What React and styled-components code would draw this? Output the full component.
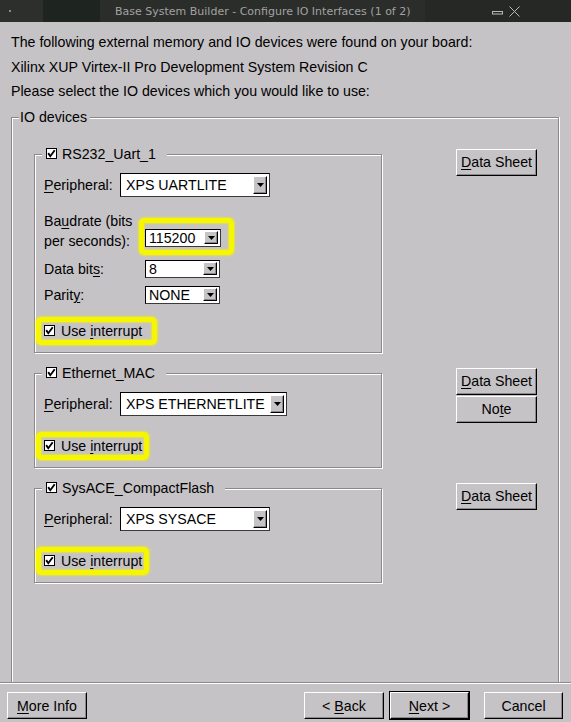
import React from 'react';
import styled, { createGlobalStyle } from 'styled-components';

const BG = '#c6c3c6';
const SHADOW = '#8b898b';
const YELLOW = '#f6f600';

const Global = createGlobalStyle`
  html, body { margin: 0; padding: 0; background: ${BG}; }
  body {
    font-family: "Liberation Sans", Arial, Helvetica, sans-serif;
    font-size: 14.2px;
    color: #000;
  }
  * { box-sizing: border-box; }
  u { text-decoration-thickness: 1px; text-underline-offset: 2px; }
`;

const Window = styled.div`
  width: 571px;
  height: 722px;
  display: flex;
  flex-direction: column;
  background: ${BG};
  overflow: hidden;
`;

/* ---------- title bar ---------- */
const TitleBar = styled.div`
  flex: none;
  height: 22px;
  display: flex;
  background: #262826;
  font-family: "DejaVu Sans", sans-serif;
  font-size: 11px;
  color: #a2a2a2;
`;

const TitleSeg = styled.div`
  width: ${p => p.$w}px;
  flex: none;
  background: ${p => p.$bg};
  display: flex;
  align-items: center;
  padding-left: ${p => p.$pl || 0}px;
  white-space: nowrap;
`;

const SysDot = styled.span`
  width: 2px;
  height: 2px;
  background: #8a8a8a;
`;

const TitleControls = styled.div`
  flex: 1;
  display: flex;
  align-items: center;
  gap: 6px;
  padding-left: 67px;
`;

const MinIcon = styled.svg`
  margin-top: 4px;
`;

/* ---------- body ---------- */
const Body = styled.div`
  flex: 1;
  min-height: 0;
  display: flex;
  flex-direction: column;
  padding: 8px 12px 0 11px;
`;

const IntroLine = styled.div`
  line-height: 24.5px;
  white-space: nowrap;
`;

const Frame = styled.div`
  position: relative;
  flex: 1;
  margin-top: 13px;
  border: 1px solid ${SHADOW};
  border-bottom: none;
  box-shadow: inset 1px 1px 0 #fff, 1px 0 0 #fff;
  padding: 31px 20px 0 22px;
  display: flex;
  flex-direction: column;
  gap: 15px;
`;

const FrameLegend = styled.div`
  position: absolute;
  top: -10px;
  left: 7px;
  padding: 0 3px 0 1px;
  line-height: 18px;
  background: ${BG};
`;

const DeviceRow = styled.div`
  display: flex;
  align-items: flex-start;
  gap: 74px;
`;

const Group = styled.div`
  position: relative;
  width: 348px;
  margin-top: 5px;
  border: 1px solid ${SHADOW};
  box-shadow: inset 1px 1px 0 #fff, 1px 1px 0 #fff;
  padding: 18px 9px 7px 9px;
  display: flex;
  flex-direction: column;
  align-items: flex-start;
`;

const GroupLegend = styled.div`
  position: absolute;
  top: -10px;
  left: 7px;
  padding: 0 11px 0 4px;
  background: ${BG};
  display: flex;
  align-items: center;
  gap: 5px;
  line-height: 18px;
  white-space: nowrap;
`;

const FieldRow = styled.div`
  display: flex;
  align-items: center;
`;

const FieldLabel = styled.span`
  width: ${p => p.$w}px;
  flex: none;
  white-space: nowrap;
`;

const Settings = styled.div`
  display: grid;
  grid-template-columns: 101px auto;
  grid-template-rows: 45px 26px 26px;
  align-items: center;
  margin-top: 14px;
`;

const MultiLabel = styled.span`
  align-self: start;
  line-height: 20px;
  white-space: nowrap;
`;

const Combo = styled.div`
  width: ${p => p.$w}px;
  height: ${p => p.$h}px;
  background: #fff;
  border: 1px solid;
  border-color: #000 #3a3a3a #3a3a3a #000;
  display: flex;
  align-items: center;
  padding-left: ${p => p.$pl}px;
  line-height: 16px;
  white-space: nowrap;
`;

const ComboText = styled.span`
  flex: 1;
`;

const ComboArrow = styled.span`
  flex: none;
  width: 14px;
  height: ${p => p.$h}px;
  margin-right: 2px;
  background: ${BG};
  border: 1px solid;
  border-color: #fff #000 #000 #fff;
  box-shadow: inset -1px -1px 0 ${SHADOW};
  display: flex;
  align-items: center;
  justify-content: center;
`;

const Highlight = styled.div`
  display: inline-flex;
  align-items: center;
  align-self: ${p => p.$align || 'auto'};
  border: 5px solid ${YELLOW};
  border-radius: 5px;
  box-shadow: 0 0 2px 1px rgba(246, 246, 0, 0.55), inset 0 0 2px 1px rgba(246, 246, 0, 0.55);
  padding: ${p => p.$pad};
  margin: ${p => p.$m};
`;

const CheckRow = styled.div`
  display: flex;
  align-items: center;
  gap: 6px;
  height: 18px;
  white-space: nowrap;
`;

const ButtonCol = styled.div`
  display: flex;
  flex-direction: column;
  gap: 1px;
  width: 81px;
`;

const Button = styled.button`
  width: ${p => p.$w || 81}px;
  height: 27px;
  flex: none;
  padding: 0;
  background: ${BG};
  color: #000;
  font-family: "Liberation Sans", Arial, sans-serif;
  font-size: 14.2px;
  border: 1px solid;
  border-color: #fff #000 #000 #fff;
  box-shadow: inset -1px -1px 0 ${SHADOW};
  cursor: default;
`;

const DefaultFrame = styled.div`
  border: 1px solid #000;
  margin-top: -1px;
  display: flex;
`;

/* ---------- footer ---------- */
const Separator = styled.div`
  flex: none;
  height: 2px;
  border-top: 1px solid ${SHADOW};
  border-bottom: 1px solid #fff;
`;

const Footer = styled.div`
  flex: none;
  height: 38px;
  display: flex;
  align-items: flex-start;
  padding: 8px 8px 0 7px;
`;

const Spacer = styled.div`
  flex: 1;
`;

const FooterGap = styled.div`
  width: ${p => p.$w}px;
  flex: none;
`;

/* ---------- small drawings ---------- */
const CheckBox = () => (
  <svg width="11" height="11" viewBox="0 0 11 11" style={{ flex: 'none' }}>
    <rect x="0.5" y="0.5" width="10" height="10" fill="#fff" stroke="#000" />
    <path d="M2.2 5.1 L4.3 8.2 L8.7 2.3" stroke="#000" strokeWidth="1.9" fill="none" />
  </svg>
);

const DownTriangle = () => (
  <svg width="7" height="4" viewBox="0 0 7 4">
    <path d="M0 0 H7 L3.5 4 Z" fill="#000" />
  </svg>
);

const ComboBox = ({ value, w, h, arrowH, pl = 5 }) => (
  <Combo $w={w} $h={h} $pl={pl}>
    <ComboText>{value}</ComboText>
    <ComboArrow $h={arrowH}>
      <DownTriangle />
    </ComboArrow>
  </Combo>
);

const UseInterrupt = ({ m, pr }) => (
  <Highlight $m={m} $pad={`0 ${pr}px 0 3px`}>
    <CheckRow>
      <CheckBox />
      <span>Use <u>i</u>nterrupt</span>
    </CheckRow>
  </Highlight>
);

const Legend = ({ children }) => (
  <GroupLegend>
    <CheckBox />
    <span>{children}</span>
  </GroupLegend>
);

const Peripheral = ({ value, w }) => (
  <FieldRow>
    <FieldLabel $w={76}><u>P</u>eripheral:</FieldLabel>
    <ComboBox value={value} w={w} h={24} arrowH={18} />
  </FieldRow>
);

export default function App() {
  return (
    <Window>
      <Global />
      <TitleBar>
        <TitleSeg $w={43} $bg="#2d2f2d" $pl={9}><SysDot /></TitleSeg>
        <TitleSeg $w={57} $bg="#1e2520" />
        <TitleSeg $w={325} $bg="#2b2d2b" $pl={15}>
          Base System Builder - Configure IO Interfaces (1 of 2)
        </TitleSeg>
        <TitleControls>
          <MinIcon width="11" height="4" viewBox="0 0 11 4">
            <rect x="0.5" y="0.5" width="10" height="2.5" fill="none" stroke="#b8b8b8" />
          </MinIcon>
          <svg width="11" height="11" viewBox="0 0 11 11">
            <path d="M0.5 0.5 L10.5 10.5 M10.5 0.5 L0.5 10.5" stroke="#b8b8b8" strokeWidth="1" />
          </svg>
        </TitleControls>
      </TitleBar>

      <Body>
        <IntroLine>The following external memory and IO devices were found on your board:</IntroLine>
        <IntroLine>Xilinx XUP Virtex-II Pro Development System Revision C</IntroLine>
        <IntroLine>Please select the IO devices which you would like to use:</IntroLine>

        <Frame>
          <FrameLegend>IO devices</FrameLegend>

          <DeviceRow>
            <Group>
              <Legend>RS232_Uart_1</Legend>
              <Peripheral value="XPS UARTLITE" w={150} />
              <Settings>
                <MultiLabel>Ba<u>u</u>drate (bits<br />per seconds):</MultiLabel>
                <Highlight $align="end" $m="0 0 1px -6px" $pad="6px 8px 3px 1px">
                  <ComboBox value="115200" w={76} h={18} arrowH={13} pl={3} />
                </Highlight>
                <span>Data bit<u>s</u>:</span>
                <ComboBox value="8" w={75} h={18} arrowH={13} pl={3} />
                <span>Parit<u>y</u>:</span>
                <ComboBox value="NONE" w={75} h={18} arrowH={13} pl={3} />
              </Settings>
              <UseInterrupt m="9px 0 0 -8px" pr={10} />
            </Group>
            <ButtonCol>
              <Button><u>D</u>ata Sheet</Button>
            </ButtonCol>
          </DeviceRow>

          <DeviceRow>
            <Group>
              <Legend>Ethernet_MAC</Legend>
              <Peripheral value="XPS ETHERNETLITE" w={167} />
              <UseInterrupt m="16px 0 0 -8px" pr={2} />
            </Group>
            <ButtonCol>
              <Button><u>D</u>ata Sheet</Button>
              <Button>No<u>t</u>e</Button>
            </ButtonCol>
          </DeviceRow>

          <DeviceRow>
            <Group>
              <Legend>SysACE_CompactFlash</Legend>
              <Peripheral value="XPS SYSACE" w={150} />
              <UseInterrupt m="16px 0 0 -8px" pr={2} />
            </Group>
            <ButtonCol>
              <Button><u>D</u>ata Sheet</Button>
            </ButtonCol>
          </DeviceRow>
        </Frame>
      </Body>

      <Separator />
      <Footer>
        <Button $w={80}><u>M</u>ore Info</Button>
        <Spacer />
        <Button $w={80}>&lt; <u>B</u>ack</Button>
        <FooterGap $w={5} />
        <DefaultFrame>
          <Button $w={79}><u>N</u>ext &gt;</Button>
        </DefaultFrame>
        <FooterGap $w={14} />
        <Button $w={79}>Cancel</Button>
      </Footer>
    </Window>
  );
}
